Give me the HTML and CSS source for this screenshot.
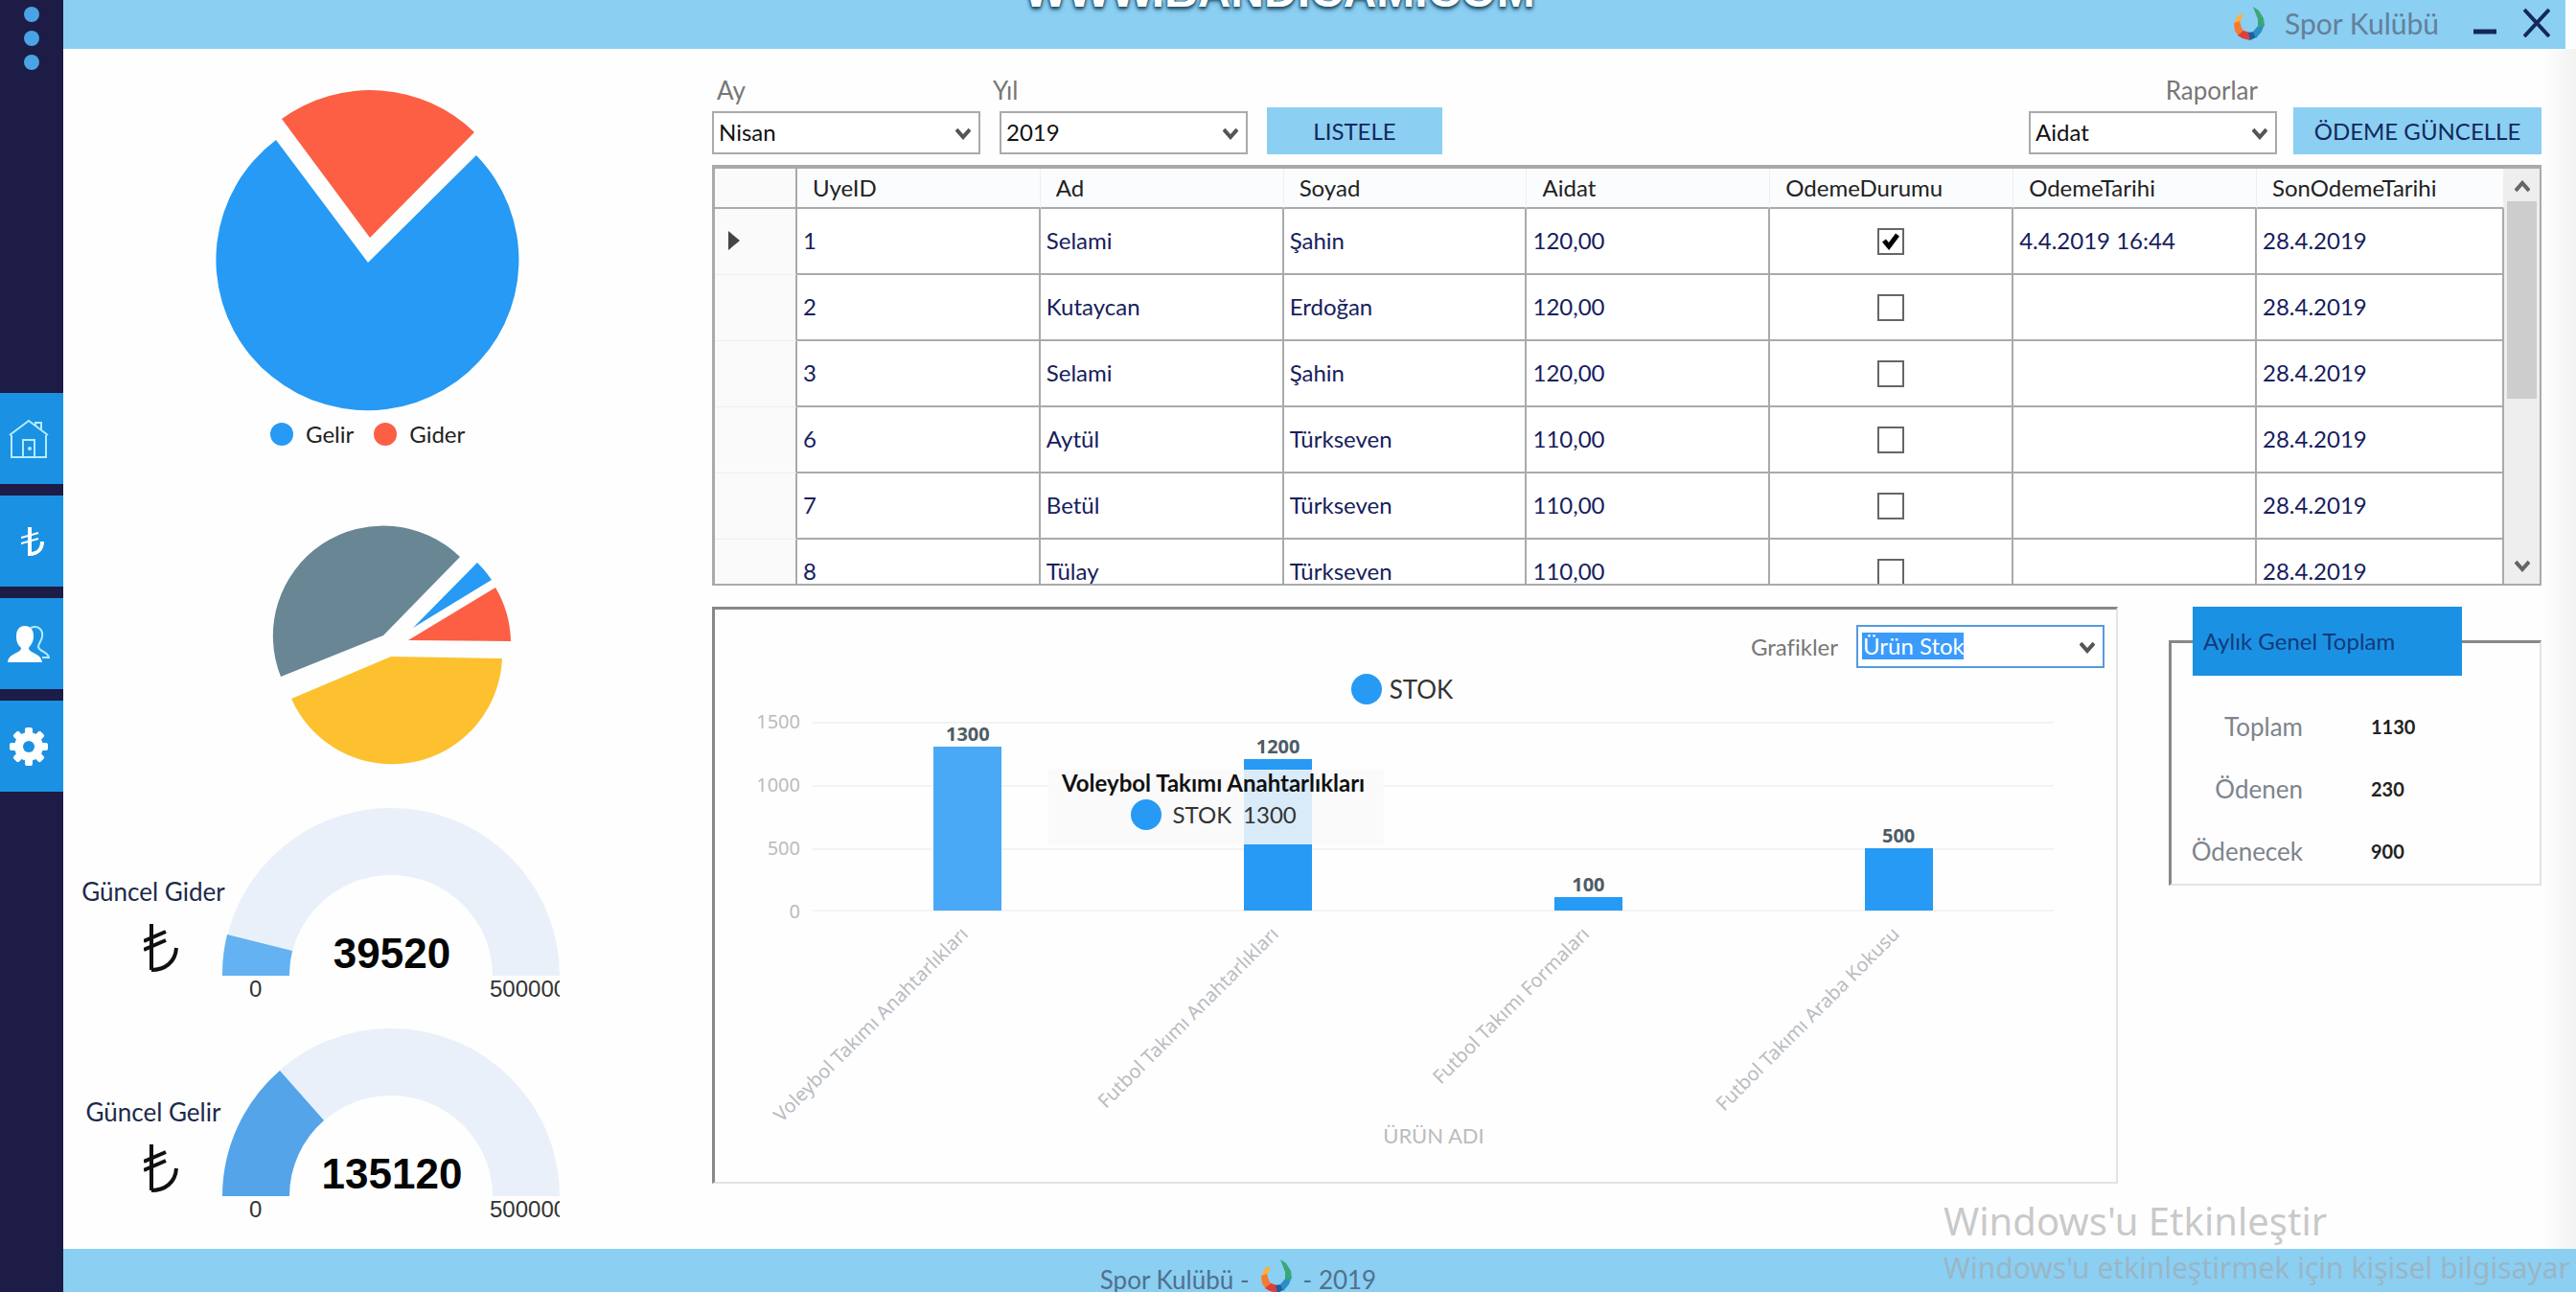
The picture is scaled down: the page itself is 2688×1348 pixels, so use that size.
FILE: index.html
```html
<!DOCTYPE html>
<html lang="tr">
<head>
    <meta charset="UTF-8">
    <title>Spor Kulübü</title>
    <link rel="stylesheet" href="styles.css">
</head>
<body>
    <svg class="defs" aria-hidden="true">
        <symbol id="logo" viewBox="0 0 32 35">
            <path fill="#fbb040" d="M0 18 L4 9 L9 7 L9 11 L6 16 L7 21 L1 24 Z"/>
            <path fill="#f47b30" d="M0 17 L6 15 L8 22 L11 26 L5 31 L1 25 Z"/>
            <path fill="#dd3f3c" d="M4 30 L10 25 L17 27 L17 35 L9 33 Z"/>
            <path fill="#1d5fa0" d="M15 27 L21 26 L25 31 L17 35 Z"/>
            <path fill="#2c8fc4" d="M20 26 L26 19 L32 18 L29 26 L23 33 Z"/>
            <path fill="#39a875" d="M20 0 L26 4 L31 12 L32 20 L25 21 L25 13 Z"/>
        </symbol>
        <symbol id="lira" viewBox="0 0 36 50">
            <path fill="none" stroke="currentColor" stroke-width="4" d="M8 0 V48 M0 18 L23 8 M0 27 L23 17 M8 48 C22 48 33 40 34 25"/>
        </symbol>
    </svg>

    <nav class="sidebar">
        <button class="menu-btn" aria-label="Menü"><span></span><span></span><span></span></button>
        <button class="nav-btn" aria-label="Ana sayfa">
            <svg width="42" height="42" viewBox="0 0 42 42" fill="none" stroke="#b5ecff" stroke-width="2">
                <path d="M3 17 V40 H39 V17 M1 17 L21 2 L41 17 M28 7 V4 H34 V11 M15 40 V22 H27 V40"/>
                <circle cx="22" cy="31" r="1"/>
            </svg>
        </button>
        <button class="nav-btn" aria-label="Ödemeler">
            <svg class="nav-lira" width="24" height="30" viewBox="0 0 24 30" fill="none" stroke="#fff">
                <path stroke-width="4" d="M9 0 V28 C16 28 22 24 22 15"/>
                <path stroke-width="2" d="M0 11 L18 6 M0 17 L18 12"/>
            </svg>
        </button>
        <button class="nav-btn" aria-label="Üyeler">
            <svg width="44" height="38" viewBox="0 0 44 38">
                <path fill="#fff" d="M18 0 C24 0 27 4 27 11 C27 17 24 20 22 23 C22 29 35 28 36 38 H0 C1 28 14 29 14 23 C11 20 9 17 9 11 C9 4 12 0 18 0 Z"/>
                <path fill="none" stroke="#b5ecff" stroke-width="2" d="M24 2 C32 -1 37 4 36 11 C36 15 32 18 32 22 C33 27 42 27 43 33 H36"/>
            </svg>
        </button>
        <button class="nav-btn" aria-label="Ayarlar">
            <svg width="40" height="40" viewBox="-20 -20 40 40">
                <g fill="#fff">
                    <rect x="-4" y="-20" width="8" height="40" rx="2"/>
                    <rect x="-4" y="-20" width="8" height="40" rx="2" transform="rotate(45)"/>
                    <rect x="-4" y="-20" width="8" height="40" rx="2" transform="rotate(90)"/>
                    <rect x="-4" y="-20" width="8" height="40" rx="2" transform="rotate(135)"/>
                    <circle r="15"/>
                </g>
                <circle r="6" fill="#1b91e3"/>
            </svg>
        </button>
    </nav>

    <div class="window">
        <header class="titlebar">
            <svg class="logo"><use href="#logo"/></svg>
            <span class="app-name">Spor Kulübü</span>
            <button class="win-btn minimize" aria-label="Küçült">
                <svg width="24" height="30" viewBox="0 0 24 30"><path stroke="#14285a" stroke-width="5" d="M0 24 H24"/></svg>
            </button>
            <button class="win-btn" aria-label="Kapat">
                <svg width="28" height="30" viewBox="0 0 28 30"><path stroke="#14285a" stroke-width="4" d="M1 1 L27 29 M27 1 L1 29"/></svg>
            </button>
        </header>

        <main class="content">
            <section class="stats">
                <svg class="pie" width="320" height="340" viewBox="0 0 320 340">
                    <path fill="#269af4" d="M160 182 L64 54 A158 157 0 1 0 273 70 Z"/>
                    <path fill="#fc5f43" d="M162 156 L70 32 A156 155 0 0 1 271 46 Z"/>
                </svg>
                <ul class="legend">
                    <li><span class="dot"></span>Gelir</li>
                    <li><span class="dot red"></span>Gider</li>
                </ul>
                <svg class="pie-small" width="252" height="256" viewBox="0 0 252 256">
                    <path fill="#698694" d="M116 116 L9 159 A115 115 0 0 1 196 34 Z"/>
                    <path fill="#269af4" d="M147 108 L214 40 A115 115 0 0 1 229 58 Z"/>
                    <path fill="#fc5f43" d="M142 121 L233 66 A115 115 0 0 1 249 122 Z"/>
                    <path fill="#fdc12f" d="M124 138 L20 182 A115 115 0 0 0 240 140 Z"/>
                </svg>

                <div class="gauge-row">
                    <div class="gauge-label">Güncel Gider
                        <svg class="lira"><use href="#lira"/></svg>
                    </div>
                    <svg class="gauge" width="352" height="206" viewBox="0 0 352 206">
                        <path fill="#eaf0f9" d="M0 175 A176 175 0 0 1 352 175 H282 A106 105 0 0 0 70 175 Z"/>
                        <path fill="#64b2f2" d="M0 175 A176 175 0 0 1 5 132 L73 149 A106 105 0 0 0 70 175 Z"/>
                        <text class="gauge-value" x="177" y="167">39520</text>
                        <text class="gauge-tick" x="28" y="197">0</text>
                        <text class="gauge-tick" x="279" y="197">500000</text>
                    </svg>
                </div>
                <div class="gauge-row">
                    <div class="gauge-label">Güncel Gelir
                        <svg class="lira"><use href="#lira"/></svg>
                    </div>
                    <svg class="gauge" width="352" height="206" viewBox="0 0 352 206">
                        <path fill="#eaf0f9" d="M0 175 A176 175 0 0 1 352 175 H282 A106 105 0 0 0 70 175 Z"/>
                        <path fill="#53a4e8" d="M0 175 A176 175 0 0 1 60 44 L106 96 A106 105 0 0 0 70 175 Z"/>
                        <text class="gauge-value" x="177" y="167">135120</text>
                        <text class="gauge-tick" x="28" y="197">0</text>
                        <text class="gauge-tick" x="279" y="197">500000</text>
                    </svg>
                </div>
            </section>

            <section class="work">
                <div class="toolbar">
                    <div class="field">
                        <label for="ay">Ay</label>
                        <select id="ay" class="month"><option>Nisan</option></select>
                    </div>
                    <div class="field year-field">
                        <label for="yil">Yıl</label>
                        <select id="yil"><option>2019</option></select>
                    </div>
                    <button class="btn">LISTELE</button>
                    <div class="field report-field">
                        <label for="rapor">Raporlar</label>
                        <select id="rapor"><option>Aidat</option></select>
                    </div>
                    <button class="btn btn-wide">ÖDEME GÜNCELLE</button>
                </div>

                <div class="grid-box">
                    <table>
                        <thead>
                            <tr><th class="row-head"></th><th>UyeID</th><th>Ad</th><th>Soyad</th><th>Aidat</th><th>OdemeDurumu</th><th>OdemeTarihi</th><th class="last">SonOdemeTarihi</th></tr>
                        </thead>
                        <tbody>
                            <tr><td class="row-head"><svg width="12" height="20" viewBox="0 0 12 20"><path fill="#444" d="M0 0 L12 10 L0 20 Z"/></svg></td><td>1</td><td>Selami</td><td>Şahin</td><td>120,00</td><td class="check"><input type="checkbox" aria-label="Ödendi" checked></td><td>4.4.2019 16:44</td><td>28.4.2019</td></tr>
                            <tr><td class="row-head"></td><td>2</td><td>Kutaycan</td><td>Erdoğan</td><td>120,00</td><td class="check"><input type="checkbox" aria-label="Ödendi"></td><td></td><td>28.4.2019</td></tr>
                            <tr><td class="row-head"></td><td>3</td><td>Selami</td><td>Şahin</td><td>120,00</td><td class="check"><input type="checkbox" aria-label="Ödendi"></td><td></td><td>28.4.2019</td></tr>
                            <tr><td class="row-head"></td><td>6</td><td>Aytül</td><td>Türkseven</td><td>110,00</td><td class="check"><input type="checkbox" aria-label="Ödendi"></td><td></td><td>28.4.2019</td></tr>
                            <tr><td class="row-head"></td><td>7</td><td>Betül</td><td>Türkseven</td><td>110,00</td><td class="check"><input type="checkbox" aria-label="Ödendi"></td><td></td><td>28.4.2019</td></tr>
                            <tr><td class="row-head"></td><td>8</td><td>Tülay</td><td>Türkseven</td><td>110,00</td><td class="check"><input type="checkbox" aria-label="Ödendi"></td><td></td><td>28.4.2019</td></tr>
                        </tbody>
                    </table>
                    <div class="scrollbar">
                        <svg width="16" height="14" viewBox="0 0 16 14"><path fill="none" stroke="#666" stroke-width="4" d="M1 11 L8 3 L15 11"/></svg>
                        <div class="thumb"></div>
                        <svg width="16" height="14" viewBox="0 0 16 14"><path fill="none" stroke="#666" stroke-width="4" d="M1 3 L8 11 L15 3"/></svg>
                    </div>
                </div>

                <div class="bottom">
                    <div class="chart-panel">
                        <div class="chart-head">
                            <label for="grafik">Grafikler</label>
                            <select id="grafik" class="active"><option>Ürün Stok</option></select>
                        </div>
                        <div class="chart-legend"><span class="dot big"></span>STOK</div>
                        <div class="chart">
                            <div class="y-axis"><span>1500</span><span>1000</span><span>500</span><span>0</span></div>
                            <div class="plot">
                                <div class="bar-col"><span>1300</span><div class="bar hover" style="height: 87%"></div></div>
                                <div class="bar-col"><span>1200</span><div class="bar" style="height: 80%"></div></div>
                                <div class="bar-col"><span>100</span><div class="bar" style="height: 7%"></div></div>
                                <div class="bar-col"><span>500</span><div class="bar" style="height: 33%"></div></div>
                                <div class="tooltip">
                                    <b>Voleybol Takımı Anahtarlıkları</b>
                                    <div><span class="dot big"></span>STOK<span>1300</span></div>
                                </div>
                            </div>
                            <div class="x-axis">
                                <div><span>Voleybol Takımı Anahtarlıkları</span></div>
                                <div><span>Futbol Takımı Anahtarlıkları</span></div>
                                <div><span>Futbol Takımı Formaları</span></div>
                                <div><span>Futbol Takımı Araba Kokusu</span></div>
                            </div>
                        </div>
                        <div class="axis-title">ÜRÜN ADI</div>
                    </div>

                    <fieldset class="totals">
                        <legend>Aylık Genel Toplam</legend>
                        <dl>
                            <dt>Toplam</dt><dd>1130</dd>
                            <dt>Ödenen</dt><dd>230</dd>
                            <dt>Ödenecek</dt><dd>900</dd>
                        </dl>
                    </fieldset>
                </div>
            </section>
        </main>

        <footer class="footer">
            <span>Spor Kulübü -</span>
            <svg class="logo"><use href="#logo"/></svg>
            <span>- 2019</span>
        </footer>
    </div>

    <div class="recorder">WWW.<b>BANDICAM</b>.COM</div>
    <div class="activate">
        <p class="activate-title">Windows'u Etkinleştir</p>
        <p>Windows'u etkinleştirmek için kişisel bilgisayar</p>
    </div>
</body>
</html>
```
FILE: styles.css
```css
* {
    box-sizing: border-box;
}

body {
    margin: 0;
    min-height: 100vh;
    display: flex;
    overflow: hidden;
    position: relative;
    background: #fefefe;
    font-family: Lato, "Noto Sans", sans-serif;
    font-size: 24px;
    line-height: 28px;
    color: #1c2a4a;
}

button, select, input {
    font: inherit;
    color: inherit;
    margin: 0;
}

button {
    border: none;
    padding: 0;
    cursor: pointer;
}

svg {
    display: block;
    flex: none;
}

.defs {
    position: absolute;
    width: 0;
    height: 0;
}

/* sol menü */
.sidebar {
    flex: none;
    width: 66px;
    background: #1c1c46;
    display: flex;
    flex-direction: column;
    gap: 12px;
}

.menu-btn {
    display: flex;
    flex-direction: column;
    align-items: center;
    gap: 9px;
    height: 398px;
    padding-top: 7px;
    background: none;
}

.menu-btn span {
    width: 16px;
    height: 16px;
    border-radius: 50%;
    background: #4aa3e4;
}

.nav-btn {
    height: 95px;
    padding-right: 6px;
    background: #1b91e3;
    display: flex;
    align-items: center;
    justify-content: center;
}

.nav-lira {
    margin-left: 8px;
}

/* pencere */
.window {
    flex: 1;
    min-width: 0;
    display: flex;
    flex-direction: column;
}

.titlebar {
    height: 51px;
    margin-right: 11px;
    padding: 0 16px 3px 0;
    background: #8bcff3;
    display: flex;
    align-items: center;
    justify-content: flex-end;
}

.logo {
    width: 32px;
    height: 35px;
}

.app-name {
    margin: 0 36px 0 21px;
    font-size: 30px;
    line-height: 36px;
    color: #64809a;
}

.win-btn {
    background: none;
}

.minimize {
    margin-right: 28px;
}

.content {
    flex: 1;
    display: grid;
    grid-template-columns: 677px 1fr;
    padding-right: 36px;
    background: linear-gradient(to left, #f2f2f2, #fefefe 34px);
}

/* grafikler */
.stats {
    padding-top: 41px;
}

.pie {
    margin-left: 158px;
}

.legend {
    list-style: none;
    margin: 7px 0 0 216px;
    padding: 0;
    display: flex;
    gap: 21px;
    color: #222;
}

.legend li {
    display: flex;
    align-items: center;
    gap: 13px;
}

.dot {
    width: 24px;
    height: 24px;
    border-radius: 50%;
    background: #269af4;
}

.dot.red {
    background: #fc5f43;
}

.dot.big {
    width: 32px;
    height: 32px;
}

.pie-small {
    margin: 80px 0 40px 218px;
}

.gauge-row {
    display: flex;
    margin: 0 0 24px 16px;
}

.gauge-label {
    width: 156px;
    padding-top: 73px;
    font-size: 26px;
    text-align: center;
    white-space: nowrap;
}

.lira {
    width: 36px;
    height: 50px;
    margin: 20px 0 0 68px;
    color: #111;
}

.gauge {
    margin-left: -6px;
}

.gauge-value {
    font: bold 44px "Liberation Sans", Arial, sans-serif;
    text-anchor: middle;
    fill: #050505;
}

.gauge-tick {
    font: 24px "Liberation Sans", Arial, sans-serif;
    fill: #333;
}

/* araç çubuğu */
.work {
    min-width: 0;
    padding-top: 29px;
}

.toolbar {
    display: flex;
    align-items: flex-end;
    margin-bottom: 11px;
}

.field {
    display: flex;
    flex-direction: column;
    gap: 8px;
}

.field label, .chart-head label {
    color: #777;
}

.field label {
    padding-left: 5px;
    font-size: 26px;
}

select {
    width: 259px;
    height: 45px;
    padding: 0 5px 2px;
    border: 2px solid #aaa;
    border-radius: 0;
    color: #111;
    appearance: none;
    background: #fff url("data:image/svg+xml,%3Csvg xmlns='http://www.w3.org/2000/svg' width='16' height='14'%3E%3Cpath d='M1 3 L8 11 L15 3' fill='none' stroke='%23555' stroke-width='4'/%3E%3C/svg%3E") no-repeat right 8px center;
}

select.month {
    width: 280px;
}

.year-field {
    margin-left: 13px;
}

.year-field label {
    padding-left: 0;
}

.year-field select {
    margin-left: 7px;
}

.report-field {
    margin-left: auto;
}

.report-field label {
    padding-right: 20px;
    text-align: right;
}

.btn {
    width: 183px;
    height: 49px;
    margin-left: 20px;
    background: #8bcff3;
    color: #14285a;
}

.btn-wide {
    width: 259px;
    margin-left: 17px;
}

/* tablo */
.grid-box {
    display: flex;
    height: 439px;
    overflow: hidden;
    border: 2px solid #aaa;
    border-width: 4px 2px 2px 3px;
}

table {
    flex: 1;
    width: 100%;
    table-layout: fixed;
    border-collapse: separate;
    border-spacing: 0;
}

th {
    height: 42px;
    padding: 0 0 0 16px;
    font-weight: normal;
    text-align: left;
    color: #222;
    background: #fbfcfd;
    border-right: 1px solid #eee;
    border-bottom: 2px solid #aaa;
}

.last {
    width: 258px;
}

td {
    height: 69px;
    padding: 0 0 2px 6px;
    color: #16205c;
    background: #fff;
    border-right: 2px solid #aaa;
    border-bottom: 2px solid #aaa;
}

.row-head {
    width: 86px;
    background: #fafafa;
    border-right: 2px solid #aaa;
}

td.row-head {
    padding-left: 14px;
    border-bottom: 1px solid #eee;
}

td.check {
    padding: 0;
    text-align: center;
}

input[type="checkbox"] {
    display: block;
    margin: 0 auto;
    width: 28px;
    height: 28px;
    appearance: none;
    border: 2px solid #666;
    background: #fff;
}

input[type="checkbox"]:checked {
    background: #fff url("data:image/svg+xml,%3Csvg xmlns='http://www.w3.org/2000/svg' width='20' height='20'%3E%3Cpath d='M3 9 L8 15 L17 3' fill='none' stroke='%23000' stroke-width='5'/%3E%3C/svg%3E") no-repeat center;
}

.scrollbar {
    flex: none;
    width: 37px;
    padding: 12px 3px;
    background: #eee;
    display: flex;
    flex-direction: column;
    align-items: center;
}

.thumb {
    width: 100%;
    height: 206px;
    margin: 8px 0 auto;
    background: #cdcdcd;
}

/* alt bölüm */
.bottom {
    display: flex;
    align-items: flex-start;
    justify-content: space-between;
    gap: 53px;
    padding-top: 22px;
}

.chart-panel {
    flex: 1;
    height: 602px;
    border: 2px solid #e3e3e3;
    border-top: 3px solid #888;
    border-left: 3px solid #888;
}

.chart-head {
    display: flex;
    align-items: center;
    justify-content: flex-end;
    gap: 19px;
    padding: 16px 12px 0 0;
}

/* metin seçili durumda */
select.active {
    border-color: #559ade;
    color: #fff;
    background:
        url("data:image/svg+xml,%3Csvg xmlns='http://www.w3.org/2000/svg' width='16' height='14'%3E%3Cpath d='M1 3 L8 11 L15 3' fill='none' stroke='%23555' stroke-width='4'/%3E%3C/svg%3E") no-repeat right 8px center,
        linear-gradient(#3b9bfb, #3b9bfb) no-repeat 4px 6px / 106px 28px,
        #fff;
}

.chart-legend {
    display: flex;
    align-items: center;
    justify-content: center;
    gap: 8px;
    margin: 6px 28px 18px 0;
    font-size: 26px;
    color: #333;
}

.chart {
    display: grid;
    grid-template-columns: 102px 1fr;
    padding-right: 65px;
    font-family: "Noto Sans", sans-serif;
    font-size: 20px;
}

.y-axis {
    display: flex;
    flex-direction: column;
    justify-content: space-between;
    margin: -14px 13px -14px 0;
    text-align: right;
    color: #b9bcc0;
}

.plot {
    position: relative;
    display: grid;
    grid-template-columns: repeat(4, 1fr);
    height: 198px;
    border-bottom: 2px solid #f3f3f3;
    background: repeating-linear-gradient(#f3f3f3 0, #f3f3f3 2px, transparent 2px, transparent 66px);
}

.bar-col {
    height: 197px;
    display: flex;
    flex-direction: column;
    align-items: center;
    justify-content: flex-end;
    font-weight: bold;
    line-height: 26px;
    color: #4d5c66;
}

.bar {
    flex: none;
    width: 71px;
    background: #269af4;
}

.bar.hover {
    background: #49a9f7;
}

.tooltip {
    position: absolute;
    left: 19%;
    top: 50px;
    padding: 0 20px 12px 14px;
    font: 24px/28px Lato, "Noto Sans", sans-serif;
    color: #333;
    background: rgba(249, 249, 249, 0.85);
}

.tooltip b {
    color: #111;
}

.tooltip div {
    display: flex;
    align-items: center;
    justify-content: center;
    gap: 12px;
    height: 38px;
}

.x-axis {
    grid-column: 2;
    display: grid;
    grid-template-columns: repeat(4, 1fr);
    height: 220px;
    padding-top: 10px;
    color: #b9bcc0;
}

.x-axis div {
    display: flex;
    justify-content: flex-end;
    align-items: flex-start;
    padding-right: 54%;
}

.x-axis span {
    white-space: nowrap;
    transform: rotate(-45deg);
    transform-origin: top right;
}

.axis-title {
    text-align: center;
    font-size: 22px;
    color: #b9bcc0;
    padding-left: 38px;
}

.totals {
    width: 389px;
    margin: 0;
    padding: 0 0 20px;
    border: 2px solid #e3e3e3;
    border-top: 3px solid #888;
    border-left: 3px solid #888;
}

.totals legend {
    width: 281px;
    margin-left: 22px;
    padding: 22px 11px;
    background: #1b91e3;
    color: #123a7c;
}

.totals dl {
    display: grid;
    grid-template-columns: 137px 1fr;
    gap: 37px 71px;
    margin: 39px 0 0;
    align-items: center;
}

.totals dt {
    font-size: 26px;
    text-align: right;
    color: #7d848c;
}

.totals dd {
    margin: 0;
    font-weight: bold;
    font-size: 20px;
    color: #222;
}

.footer {
    height: 47px;
    padding: 11px 170px 0 0;
    background: #8bcff3;
    color: #50718c;
    font-size: 26px;
    display: flex;
    justify-content: center;
    gap: 12px;
}

.footer span {
    line-height: 42px;
}

/* üstte duran yazılar */
.recorder {
    position: absolute;
    top: -35px;
    left: 0;
    right: 0;
    padding-right: 18px;
    text-align: center;
    font: bold 48px/52px "Liberation Sans", Arial, sans-serif;
    color: #fff;
    text-shadow: 0 2px 3px #24536b, 0 0 3px #24536b, 0 3px 5px #3d728c;
}

.activate {
    position: absolute;
    right: 6px;
    bottom: 8px;
    font: 30px/38px "Noto Sans", sans-serif;
    color: rgba(165, 165, 165, 0.6);
    white-space: nowrap;
}

.activate p {
    margin: 0;
}

.activate .activate-title {
    font-size: 40px;
    line-height: 60px;
}
```
